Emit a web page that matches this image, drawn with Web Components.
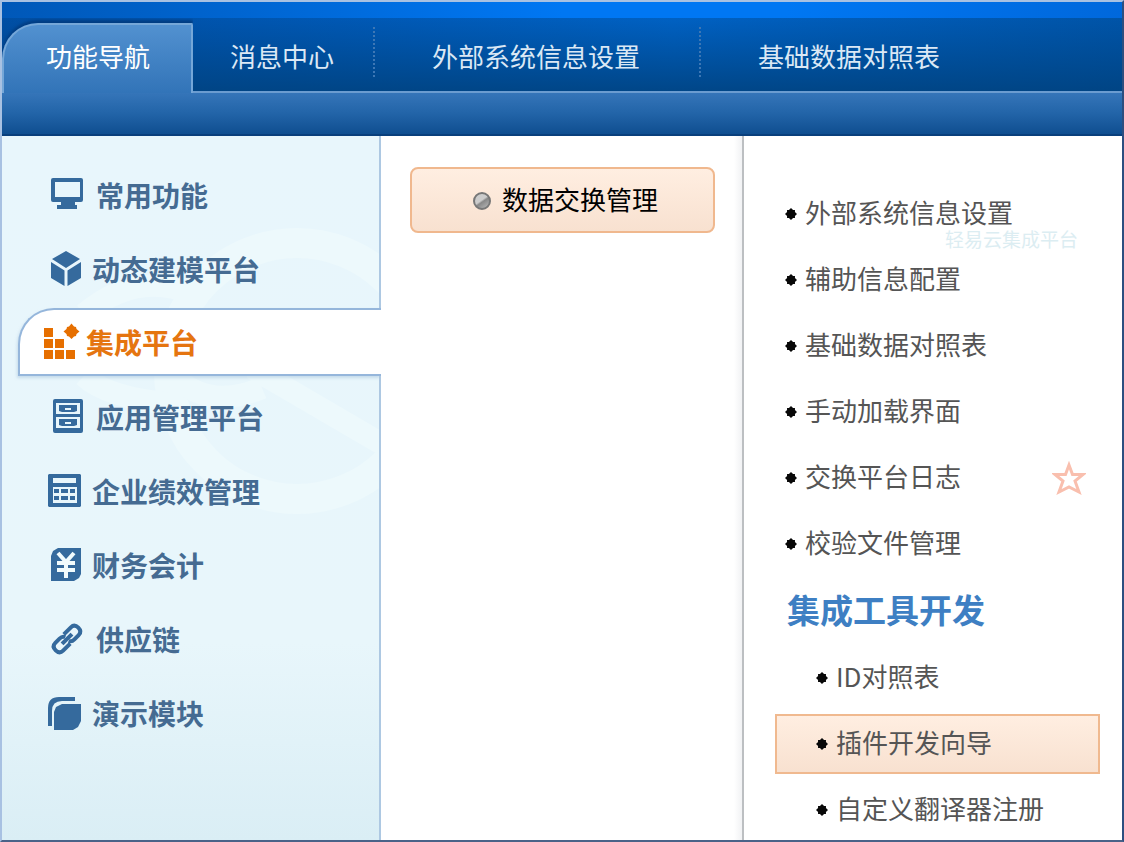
<!DOCTYPE html>
<html lang="zh-CN">
<head>
<meta charset="utf-8">
<title>功能导航</title>
<style>
html,body{margin:0;padding:0}
body{font-family:"Noto Sans CJK SC","Liberation Sans",sans-serif;font-size:26px;color:#555}
</style>
</head>
<body>
<portal-app></portal-app>
<script>
const define=(name,html,setup)=>{
  const t=document.createElement('template');
  t.innerHTML=html;
  customElements.define(name,class extends HTMLElement{
    connectedCallback(){
      if(this.shadowRoot)return;
      this.attachShadow({mode:'open'}).append(t.content.cloneNode(true));
      if(setup)setup(this,this.shadowRoot);
    }
  });
};

const icons={
  monitor:[40,'<path fill-rule="evenodd" d="M5 1h28q2 0 2 2v20q0 2-2 2h-6v3h2v4H9v-4h4v-3H5q-2 0-2-2V3q0-2 2-2zm2 4v15h25V5z"/>'],
  cube:[36,'<path d="M18 0 32 8 18 17 4 8zM3 11l13.500 8.500V35L3 27zM33 11l-13.500 8.500V35L33 27z"/>'],
  blocks:[36,'<path d="M2 4h9v9H2zM2 15h9v9H2zM13 15h9v9h-9zM2 26h9v9H2zM13 26h9v9h-9zM24 26h9v9h-9zM29.500-.5l2.500 3 2 .5 .5 2 3 2.500-3 2.500-.5 2-2 .5-2.500 2.500-2.500-2.500-2-.5-.5-2-3-2.500 3-2.500 .5-2 2-.5z"/>'],
  drawers:[40,'<path fill-rule="evenodd" d="M7 0h26q2 0 2 2v30q0 2-2 2H7q-2 0-2-2V2q0-2 2-2zm1 4v11h24V4zm0 14v11h24V18z"/><path fill-rule="evenodd" d="M11 6h18v6l-3 1H14l-3-1zm6 3v2h6V9zM11 20h18v6l-3 1H14l-3-1zm6 3v2h6v-2z"/>'],
  calc:[36,'<path fill-rule="evenodd" d="M1 1h31l1 1v31l-1 1H1l-1-1V2zM5 5v5h23V5zM5 14v16h24V14z"/><path d="M6 16h5v4H6zM13 16h7v4h-7zM22 16h5v4h-5zM6 23h5v4H6zM13 23h7v4h-7zM22 23h5v4h-5z"/>'],
  yuan:[36,'<path d="M10 1h23v26l-2 4-5 3H3V9l2-5z"/><path d="m10 6 8 9 8-9M9 16h18M9 23h18M18 15v16" fill="none" stroke="#f1fbfd" stroke-width="4"/>'],
  link:[40,'<g transform="rotate(-45 19 18)" fill="none" stroke="currentColor" stroke-width="4"><path d="M20 12.500h10q5 0 5 5.500t-5 5.500h-6q-4 0-5-3M18 23.500H8q-5 0-5-5.500t5-5.500h6q4 0 5 3"/><path d="M12 18h14"/></g>'],
  module:[36,'<path d="M14 9h19v17l-3 6-5 3H6V17l2-5z"/><path d="M0 31V13Q0 2 11 2h16v4H14Q4 6 4 16v15z"/>']
};

define('nav-tab',`<style>
:host{display:block}
a{display:flex;align-items:center;height:100%;box-sizing:border-box;padding:2px 59px 0 57px;color:#dbe8f5;text-decoration:none;white-space:nowrap;position:relative}
:host([compact]) a{padding-inline:37px 39px}
:host([divided]) a{padding-right:61px}
:host([compact][divided]) a{padding-right:41px}
:host([divided]) a::after{content:"";position:absolute;right:0;top:9px;bottom:14px;width:2px;background:repeating-linear-gradient(#3d77b5 0 2px,transparent 2px 4px)}
:host([active]) a{margin-top:5px;height:calc(100% - 3px);padding:0 41px 8px 42px;color:#fff;border:2px solid #75a7d8;border-bottom:0;border-radius:36px 2px 0 0;background:linear-gradient(#5291d0,#3274b8);box-shadow:0 -3px 3px #003d82;clip-path:inset(-5px 0 0 0)}
</style><a href="#"><slot></slot></a>`,(h,r)=>{if(h.hasAttribute('active'))r.querySelector('a').setAttribute('aria-current','page')});

define('top-tabs',`<style>
:host{display:block}
.strip{height:16px;background:linear-gradient(90deg,#0058b8,#0077f3 50%,#0077f3 70%,#0068dc)}
nav{display:flex;height:73px;background:linear-gradient(#00458a00,#00427fdd),linear-gradient(90deg,#004fa5,#0061c3 60%,#0054a8)}
.sub{height:45px;box-sizing:border-box;border-top:2px solid #6b9cd0;border-bottom:2px solid #093f7c;background:linear-gradient(#3575b9,#2264a8 50%,#0f4e90);display:flex}
.sub::before{content:"";width:189px;height:2px;margin-top:-2px;background:#3274b8}
</style>
<div class="strip"></div>
<nav aria-label="主导航"><nav-tab active>功能导航</nav-tab><nav-tab compact divided>消息中心</nav-tab><nav-tab divided>外部系统信息设置</nav-tab><nav-tab>基础数据对照表</nav-tab></nav>
<div class="sub"></div>`);

define('side-item',`<style>
:host{display:block;position:relative}
a{display:flex;align-items:center;gap:8px;height:68px;box-sizing:border-box;padding:2px 0 0 46px;color:#456b92;font-size:28px;font-weight:700;text-decoration:none;white-space:nowrap}
svg{flex:none;color:#356a9d;fill:currentColor;overflow:visible}
:host([active]){margin:0 -2px 0 16px}
:host([active]) a{padding:0 0 0 22px;background:#fff;color:#e57510;border:2px solid #95b6db;border-right:0;border-radius:36px 0 0 0;box-shadow:-1px 2px 3px #a9c5dd88;clip-path:inset(-4px 0 -6px -4px)}
:host([active]) svg{color:#e66f00}
</style><a href="#"><svg height="36" aria-hidden="true"></svg><slot></slot></a>`,(h,r)=>{
  const [w,body]=icons[h.getAttribute('icon')],s=r.querySelector('svg');
  s.setAttribute('width',w);s.setAttribute('viewBox','0 0 '+w+' 36');s.innerHTML=body;
  if(h.hasAttribute('active'))r.querySelector('a').setAttribute('aria-current','true');
});

define('side-nav',`<style>
:host{display:block;position:relative;border-right:2px solid #adc8e2;background:linear-gradient(#e8f6fc,#e8f6fb 72%,#daeef5)}
nav{display:flex;flex-direction:column;gap:6px;padding:24px 0}
.art{position:absolute;inset:0;width:100%;height:100%}
</style>
<svg class="art" aria-hidden="true" fill="none" stroke="#edf9fc"><circle cx="295" cy="235" r="128" stroke-width="30"/><path d="M82 178Q135 134 190 158M82 240Q105 262 172 268M170 238Q205 275 260 252M250 232L380 308" stroke-width="22"/></svg>
<nav aria-label="功能模块">
<side-item icon="monitor">常用功能</side-item>
<side-item icon="cube">动态建模平台</side-item>
<side-item icon="blocks" active>集成平台</side-item>
<side-item icon="drawers">应用管理平台</side-item>
<side-item icon="calc">企业绩效管理</side-item>
<side-item icon="yuan">财务会计</side-item>
<side-item icon="link">供应链</side-item>
<side-item icon="module">演示模块</side-item>
</nav>`);

define('group-panel',`<style>
:host{display:block;padding:31px 27px 0 29px;border-right:2px solid #bcbfc2;background:linear-gradient(270deg,#f1f2f4,#fff 8px)}
button{display:flex;align-items:center;justify-content:center;gap:11px;width:100%;height:66px;padding:0 0 4px 6px;border:2px solid #f0b88e;border-radius:8px;background:linear-gradient(#ffeee1,#f8e1d0);color:#000;font:inherit}
i{width:18px;height:18px;box-sizing:border-box;border:2px solid #777;border-radius:50%;margin-top:6px;background:linear-gradient(145deg,#ccc 0 45%,#888 55%,#bbb)}
</style><button type="button"><i></i><slot></slot></button>`);

define('function-item',`<style>
:host{display:flex;align-items:center;height:60px;box-sizing:border-box}
a{display:flex;align-items:center;gap:8px;flex:1;height:100%;box-sizing:border-box;padding:0 0 4px 10px;color:#555;line-height:30px;text-decoration:none;white-space:nowrap}
a::before{content:"";width:12px;height:12px;margin-top:4px;background:#080808;clip-path:polygon(50% 0,67% 17%,83% 17%,83% 33%,100% 50%,83% 67%,83% 83%,67% 83%,50% 100%,33% 83%,17% 83%,17% 67%,0 50%,17% 33%,17% 17%,33% 17%)}
:host([nested]) a{padding-left:41px}
:host([active]) a{padding-left:39px;border:2px solid #f0b98f;background:linear-gradient(#ffeee1,#f8e1d0)}
button{border:0;padding:0;margin-right:14px;background:none;display:none}
:host([starred]) button{display:block}
svg{display:block}
</style><a href="#"><slot></slot></a><button type="button" aria-label="收藏"><svg width="34" height="34" fill="none" stroke="#f9bfae" stroke-width="3"><path d="m17 4 3.500 9.500H31l-8 6.500 4 11-10-5-10 5 4-11-8-6.500h10.500z"/></svg></button>`);

define('function-panel',`<style>
:host{display:block;position:relative;background:#fff;padding:48px 22px 0 31px}
.list{display:flex;flex-direction:column;gap:6px}
h2{margin:0;padding-left:12px;font-size:33px;line-height:58px;height:62px;color:#3e7fc3;font-weight:700}
.mark{position:absolute;right:44px;top:93px;font-size:19px;line-height:20px;color:#dcedf2;pointer-events:none}
</style>
<div class="list">
<function-item>外部系统信息设置</function-item>
<function-item>辅助信息配置</function-item>
<function-item>基础数据对照表</function-item>
<function-item>手动加载界面</function-item>
<function-item starred>交换平台日志</function-item>
<function-item>校验文件管理</function-item>
<h2>集成工具开发</h2>
<function-item nested>ID对照表</function-item>
<function-item nested active>插件开发向导</function-item>
<function-item nested>自定义翻译器注册</function-item>
</div>
<span class="mark">轻易云集成平台</span>`);

define('portal-app',`<style>
:host{display:flex;flex-direction:column;min-height:100vh;box-sizing:border-box;border:2px solid #a8c1e2;border-right-color:#2c4f80;border-bottom-color:#4a6288}
main{flex:1;display:grid;grid-template-columns:379fr 363fr 378fr}
</style>
<top-tabs></top-tabs>
<main><side-nav></side-nav><group-panel>数据交换管理</group-panel><function-panel></function-panel></main>`);
</script>
</body>
</html>
